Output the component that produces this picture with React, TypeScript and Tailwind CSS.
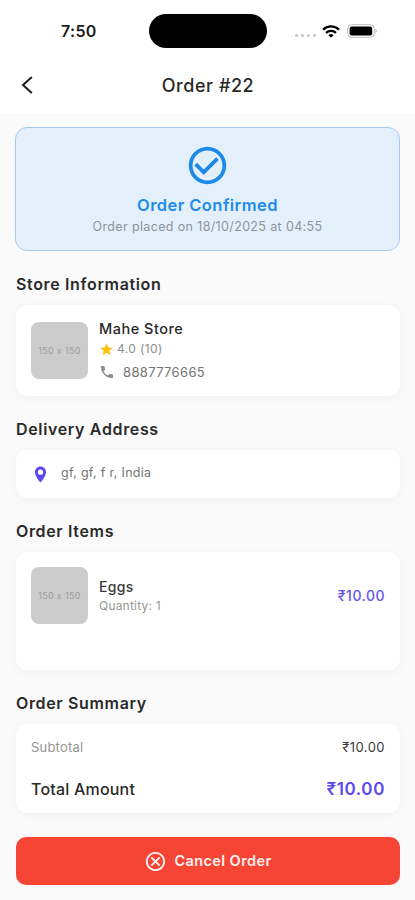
import type { ReactNode } from "react"
import { MdCheckCircleOutline, MdOutlineCancel, MdPhone, MdStar } from "react-icons/md"

const order = {
  id:       22,
  placedOn: "18/10/2025",
  placedAt: "04:55",
  store:    { name: "Mahe Store", rating: "4.0 (10)", phone: "8887776665" },
  address:  "gf, gf, f r, India",
  items:    [{ name: "Eggs", quantity: 1, price: "₹10.00" }],
  total:    "₹10.00",
}

function StatusBar() {
  return (
    <div className="flex h-[62px] shrink-0 items-center bg-white">
      <div className="w-[149px] pl-[61px] text-[16px] leading-5 font-semibold tracking-[0.3px] text-[#1c1c1c]">7:50</div>
      <div className="h-[34px] w-[118px] rounded-full bg-black" />
      <div className="ml-[28px] flex items-center">
        <div className="mt-[9px] flex gap-[3px]">
          <span className="size-[3px] rounded-full bg-[#c6c6c6]" />
          <span className="size-[3px] rounded-full bg-[#c6c6c6]" />
          <span className="size-[3px] rounded-full bg-[#c6c6c6]" />
          <span className="size-[3px] rounded-full bg-[#c6c6c6]" />
        </div>
        <svg className="ml-[6px] h-[13px] w-[18px]" viewBox="0 0 18 13" fill="none" stroke="#000" strokeWidth="2.2">
          <path d="M1 4.7a11.4 11.4 0 0 1 16 0" />
          <path d="M4 7.9a7.1 7.1 0 0 1 10 0" />
          <path d="M9 12.7 6.4 10.2a3.7 3.7 0 0 1 5.2 0z" fill="#000" stroke="none" />
        </svg>
        <svg className="ml-[7px] h-[14px] w-[30px]" viewBox="0 0 30 14">
          <rect x="0.7" y="0.7" width="26.6" height="12.6" rx="4" fill="none" stroke="#bdbdbd" />
          <rect x="2.6" y="2.6" width="22.6" height="8.8" rx="2" />
          <path d="M28.5 5v4c.8-.3 1.2-1.1 1.2-2s-.4-1.7-1.2-2z" fill="#aaa" />
        </svg>
      </div>
    </div>
  )
}

function Section({ title, className, children }: { title: string; className: string; children: ReactNode }) {
  return (
    <section>
      <h2 className="text-[16px] leading-5 font-semibold tracking-[0.65px] text-[#2a2a2a]">{title}</h2>
      <div className={`mt-[11px] rounded-[11px] bg-white px-[15px] shadow-[0_2px_10px_rgba(0,0,0,0.04)] ${className}`}>
        {children}
      </div>
    </section>
  )
}

function Thumbnail() {
  return (
    <div className="flex size-[57px] shrink-0 items-center justify-center rounded-[8px] bg-[#cccccc] text-[9px] tracking-[0.35px] text-[#9c9c9c]">
      150 x 150
    </div>
  )
}

export default function App() {
  return (
    <div className="flex h-[900px] w-full flex-col overflow-hidden bg-[#fafafa] font-['Inter',sans-serif]">
      <StatusBar />
      <header className="flex h-[51px] shrink-0 items-start bg-white pt-[11px]">
        <button className="flex h-6 w-[56px] items-center pl-[21px]" aria-label="Back">
          <svg className="h-[18px] w-[12px]" viewBox="0 0 12 18" fill="none" stroke="#1c1c1c" strokeWidth="2">
            <path d="M10.8 0.9 2 9l8.8 8.1" />
          </svg>
        </button>
        <h1 className="flex-1 pr-[55px] text-center text-[18px] leading-[25px] font-medium tracking-[0.55px] text-[#2a2a2a]">
          Order #{order.id}
        </h1>
      </header>

      <main className="flex flex-col pt-[14px] pr-[15px] pl-4">
        <div className="-ml-px flex h-[124px] flex-col items-center rounded-[12px] border border-[#a9c9f5] bg-[#e3f0fb] pt-[15px]">
          <MdCheckCircleOutline className="size-[45px] text-[#1c8ae6]" />
          <p className="mt-[7px] text-[16.5px] leading-[21px] font-semibold tracking-[0.43px] text-[#1f8ceb]">Order Confirmed</p>
          <p className="mt-px text-[12.5px] leading-5 tracking-[0.36px] text-[#8b949c]">
            Order placed on {order.placedOn} at {order.placedAt}
          </p>
        </div>

        <div className="mt-[23px] flex flex-col gap-[23px]">
          <Section title="Store Information" className="flex h-[91px] items-center">
            <Thumbnail />
            <div className="ml-[11px]">
              <p className="text-[14.5px] leading-[19px] font-medium tracking-[0.5px] text-[#2a2a2a]">{order.store.name}</p>
              <p className="mt-px flex items-center text-[12px] leading-5 tracking-[0.4px] text-[#8e8e8e]">
                <MdStar className="mr-[3px] size-[15px] text-[#ffc107]" />
                {order.store.rating}
              </p>
              <p className="mt-[3px] flex items-center text-[13px] leading-5 tracking-[0.35px] text-[#757575]">
                <MdPhone className="mr-[8px] size-[16px] text-[#8a8a8a]" />
                {order.store.phone}
              </p>
            </div>
          </Section>

          <Section title="Delivery Address" className="flex h-[48px] items-center">
            <svg className="size-[19px] text-[#5b48f0]" viewBox="0 0 24 24" fill="currentColor" fillRule="evenodd">
              <path d="M12 2C8.130 2 5 5.130 5 9c0 5.250 7 13 7 13s7-7.750 7-13c0-3.870-3.130-7-7-7zm0 10.300a3.300 3.300 0 1 1 0-6.600 3.300 3.300 0 0 1 0 6.600z" />
            </svg>
            <p className="-mt-[3px] ml-[11px] text-[12.5px] leading-5 tracking-[0.3px] text-[#757575]">{order.address}</p>
          </Section>

          <Section title="Order Items" className="h-[118px] pt-[15px]">
            {order.items.map(item => (
              <div key={item.name} className="flex items-center">
                <Thumbnail />
                <div className="ml-[11px] flex-1">
                  <p className="text-[14px] leading-5 font-medium tracking-[0.3px] text-[#3a3a3a]">{item.name}</p>
                  <p className="text-[12px] leading-[18px] tracking-[0.2px] text-[#969696]">Quantity: {item.quantity}</p>
                </div>
                <p className="text-[14px] font-medium tracking-[0.5px] text-[#6353ee]">{item.price}</p>
              </div>
            ))}
          </Section>

          <Section title="Order Summary" className="h-[89px] pt-[13px]">
            <div className="flex items-center justify-between text-[13px] leading-5">
              <span className="tracking-[0.2px] text-[#969696]">Subtotal</span>
              <span className="tracking-[0.45px] text-[#3a3a3a]">{order.total}</span>
            </div>
            <div className="mt-[22px] flex items-center justify-between leading-5">
              <span className="text-[16px] font-medium tracking-[0.2px] text-[#2a2a2a]">Total Amount</span>
              <span className="text-[17px] font-semibold tracking-[0.6px] text-[#5b48f0]">{order.total}</span>
            </div>
          </Section>
        </div>

        <button className="mt-6 flex h-12 shrink-0 items-center justify-center rounded-[10px] bg-[#f64435] text-[14.5px] font-semibold tracking-[0.4px] text-[#fff1ef]">
          <MdOutlineCancel className="mr-[7px] size-[23px]" />
          Cancel Order
        </button>
      </main>
    </div>
  )
}
